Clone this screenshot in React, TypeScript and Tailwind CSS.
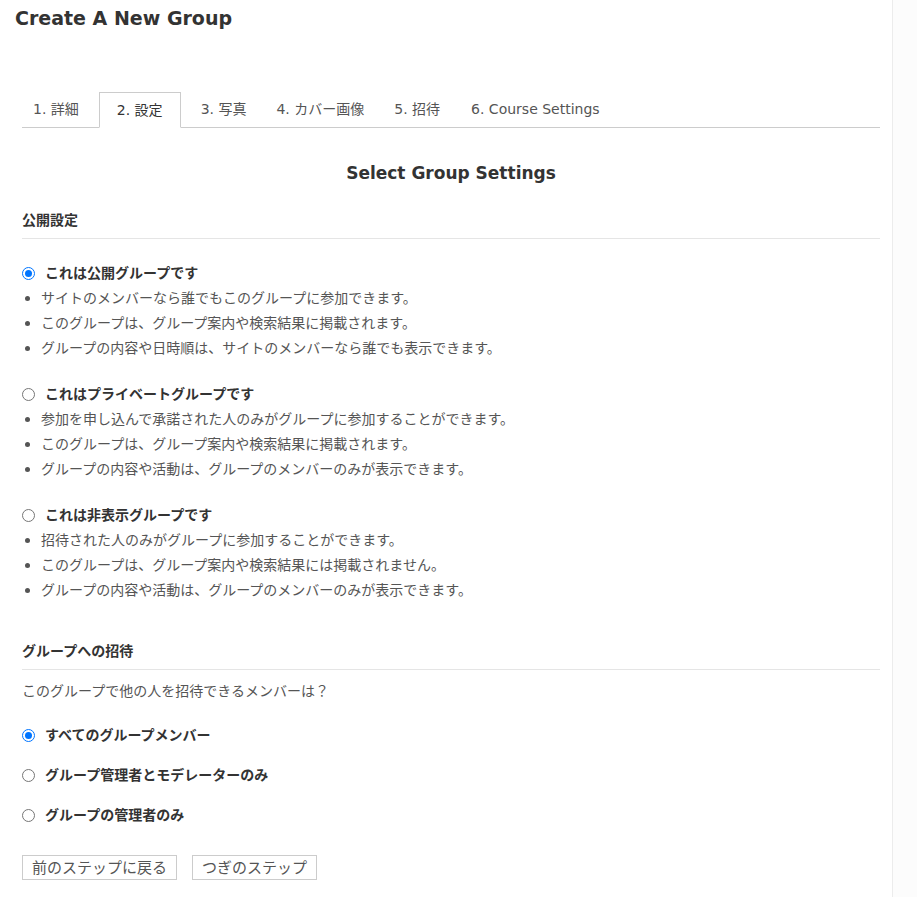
import React from "react";

const font = { fontFamily: '"DejaVu Sans", "Noto Sans CJK JP", sans-serif' };

function Radio({ checked }: { checked?: boolean }) {
  return checked ? (
    <span className="inline-flex h-[13px] w-[13px] shrink-0 items-center justify-center rounded-full border border-[#0075ff] bg-white">
      <span className="h-[7px] w-[7px] rounded-full bg-[#0075ff]" />
    </span>
  ) : (
    <span className="inline-block h-[13px] w-[13px] shrink-0 rounded-full border border-[#767676] bg-white" />
  );
}

function Option({
  checked,
  label,
  items,
}: {
  checked?: boolean;
  label: string;
  items: string[];
}) {
  return (
    <div>
      <div className="flex h-[26px] items-center gap-[10px]">
        <Radio checked={checked} />
        <span className="text-[14px] font-bold text-[#333]">{label}</span>
      </div>
      <ul className="flex flex-col">
        {items.map((t) => (
          <li key={t} className="flex h-[25px] items-center text-[14px] text-[#555]">
            <span className="mr-[11px] ml-[3px] h-[5px] w-[5px] rounded-full bg-[#555]" />
            {t}
          </li>
        ))}
      </ul>
    </div>
  );
}

export default function App() {
  const tabs = ["1. 詳細", "2. 設定", "3. 写真", "4. カバー画像", "5. 招待", "6. Course Settings"];
  const tabCls = [
    "flex h-[35px] items-center pl-[11px] pr-[20px] text-[14px] text-[#555]",
    "-mb-px flex h-[36px] items-center border border-b-white border-[#ccc] bg-white px-[17px] text-[14px] text-[#333]",
    "ml-[5px] flex h-[35px] items-center px-[15px] text-[14px] text-[#555]",
    "flex h-[35px] items-center px-[15px] text-[14px] text-[#555]",
    "flex h-[35px] items-center px-[15px] text-[14px] text-[#555]",
    "flex h-[35px] items-center px-[16px] text-[14px] text-[#555]",
  ];
  return (
    <div className="flex min-h-[897px] bg-[#fcfcfc]" style={font}>
      <div className="w-[893px] shrink-0 border-r border-[#ececec] bg-white pb-[17px]">
        <h1 className="pl-[15px] pt-[5px] text-[19px] font-bold leading-[26px] text-[#333]">Create A New Group</h1>
        <div className="ml-[22px] mr-[12px] mt-[61px] flex border-b border-[#ccc]">
          {tabs.map((t, i) => (
            <div key={t} className={tabCls[i]}>
              {t}
            </div>
          ))}
        </div>
        <div className="ml-[22px] mr-[12px]">
          <h2 className="mt-[33px] text-center text-[17px] font-bold leading-[24px] text-[#333]">Select Group Settings</h2>
          <div className="mt-[26px] border-b border-[#e5e5e5] pb-[9px] text-[14px] font-bold leading-[18px] text-[#333]">公開設定</div>
          <div className="mt-[21px] flex flex-col gap-[20px]">
            <Option
              checked
              label="これは公開グループです"
              items={[
                "サイトのメンバーなら誰でもこのグループに参加できます。",
                "このグループは、グループ案内や検索結果に掲載されます。",
                "グループの内容や日時順は、サイトのメンバーなら誰でも表示できます。",
              ]}
            />
            <Option
              label="これはプライベートグループです"
              items={[
                "参加を申し込んで承諾された人のみがグループに参加することができます。",
                "このグループは、グループ案内や検索結果に掲載されます。",
                "グループの内容や活動は、グループのメンバーのみが表示できます。",
              ]}
            />
            <Option
              label="これは非表示グループです"
              items={[
                "招待された人のみがグループに参加することができます。",
                "このグループは、グループ案内や検索結果には掲載されません。",
                "グループの内容や活動は、グループのメンバーのみが表示できます。",
              ]}
            />
          </div>
          <div className="mt-[39px] border-b border-[#e5e5e5] pb-[9px] text-[14px] font-bold leading-[18px] text-[#333]">グループへの招待</div>
          <p className="mt-[11px] text-[14px] leading-[20px] text-[#555]">このグループで他の人を招待できるメンバーは？</p>
          <div className="mt-[22px] flex flex-col gap-[15px]">
            {[
              ["すべてのグループメンバー", true],
              ["グループ管理者とモデレーターのみ", false],
              ["グループの管理者のみ", false],
            ].map(([l, c]) => (
              <div key={l as string} className="flex h-[25px] items-center gap-[10px]">
                <Radio checked={c as boolean} />
                <span className="text-[14px] font-bold text-[#333]">{l as string}</span>
              </div>
            ))}
          </div>
          <div className="mt-[27px] flex gap-[15px]">
            <button className="h-[25px] border border-[#ccc] bg-white px-[9px] text-[15px] leading-[20px] text-[#555]">前のステップに戻る</button>
            <button className="h-[25px] border border-[#ccc] bg-white px-[9px] text-[15px] leading-[20px] text-[#555]">つぎのステップ</button>
          </div>
        </div>
      </div>
    </div>
  );
}
